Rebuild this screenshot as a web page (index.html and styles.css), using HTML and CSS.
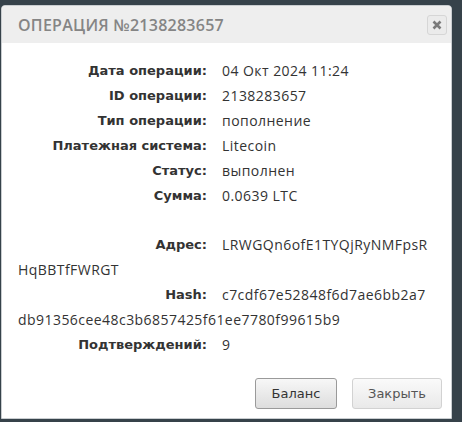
FILE: index.html
```html
<!DOCTYPE html>
<html lang="ru">
<head>
<meta charset="utf-8">
<title>Операция</title>
<link rel="stylesheet" href="styles.css">
</head>
<body>
<div class="dialog">
  <div class="header">
    <span class="title">Операция №2138283657</span>
    <button class="close" aria-label="Закрыть">
      <svg width="12" height="12" viewBox="0 0 12 12"><path d="M2.5 2.5 L9.5 9.5 M9.5 2.5 L2.5 9.5" stroke="#7a7a7a" stroke-width="2.6" stroke-linecap="butt"/></svg>
    </button>
  </div>
  <div class="content">
    <div class="row"><span class="label">Дата операции:</span><span class="value">04 Окт 2024 11:24</span></div>
    <div class="row"><span class="label">ID операции:</span><span class="value">2138283657</span></div>
    <div class="row"><span class="label">Тип операции:</span><span class="value">пополнение</span></div>
    <div class="row"><span class="label">Платежная система:</span><span class="value">Litecoin</span></div>
    <div class="row"><span class="label">Статус:</span><span class="value">выполнен</span></div>
    <div class="row"><span class="label">Сумма:</span><span class="value">0.0639 LTC</span></div>
    <div class="row empty"></div>
    <div class="row"><span class="label">Адрес:</span><span class="value">LRWGQn6ofE1TYQjRyNMFpsRHqBBTfFWRGT</span></div>
    <div class="row"><span class="label">Hash:</span><span class="value">c7cdf67e52848f6d7ae6bb2a7db91356cee48c3b6857425f61ee7780f99615b9</span></div>
    <div class="row"><span class="label">Подтверждений:</span><span class="value">9</span></div>
  </div>
  <div class="footer">
    <button class="btn btn-primary">Баланс</button>
    <button class="btn btn-secondary">Закрыть</button>
  </div>
</div>
</body>
</html>
```

FILE: styles.css
```css
html, body {
  margin: 0;
  padding: 0;
}
body {
  background: #36424a;
  width: 462px;
  height: 422px;
  padding: 5px 0 0 1px;
  box-sizing: border-box;
  overflow: hidden;
}
.dialog {
  width: 451px;
  height: 414px;
  background: #fff;
  border: 1px solid #c9cdd0;
  border-radius: 4px 4px 0 0;
  box-sizing: border-box;
  display: flex;
  flex-direction: column;
  overflow: hidden;
}
.header {
  height: 37px;
  background: #eeeeee;
  display: flex;
  align-items: center;
  justify-content: space-between;
  padding: 0 4px 0 16px;
  flex: none;
}
.title {
  font-family: "Open Sans", "DejaVu Sans", sans-serif;
  font-size: 16px;
  font-weight: 600;
  letter-spacing: 0.25px;
  text-transform: uppercase;
  color: #858585;
}
.close {
  width: 20px;
  height: 20px;
  padding: 0;
  border: 1px solid #d6d6d6;
  border-radius: 3px;
  background: #ebebeb;
  display: flex;
  align-items: center;
  justify-content: center;
}
.content {
  padding: 16px 18px 0 16px;
  font-family: "Open Sans", sans-serif;
  font-size: 14px;
  line-height: 24.9px;
  color: #333;
}
.row {
  word-break: break-all;
  min-height: 24.9px;
}
.label {
  float: left;
  width: 189px;
  height: 24.9px;
  padding-right: 15px;
  text-align: right;
  font-family: "DejaVu Sans", Verdana, sans-serif;
  font-weight: bold;
  font-size: 13px;
  line-height: 24.9px;
  color: #333;
  word-break: normal;
}
.value {
  font-family: "Open Sans", sans-serif;
  font-size: 14px;
  letter-spacing: 0.45px;
  color: #333;
}
.footer {
  margin-top: auto;
  display: flex;
  justify-content: flex-end;
  gap: 15px;
  padding: 0 9px 9px 0;
}
.btn {
  height: 31px;
  font-family: "DejaVu Sans", Verdana, sans-serif;
  font-size: 13px;
  border-radius: 3px;
  padding: 0;
  cursor: pointer;
}
.btn-primary {
  width: 82px;
  color: #333;
  border: 1px solid #9a9a9a;
  background: linear-gradient(#f7f7f7, #dddddd);
}
.btn-secondary {
  width: 90px;
  color: #555;
  border: 1px solid #d2d2d2;
  background: linear-gradient(#fafafa, #e9e9e9);
}
```
